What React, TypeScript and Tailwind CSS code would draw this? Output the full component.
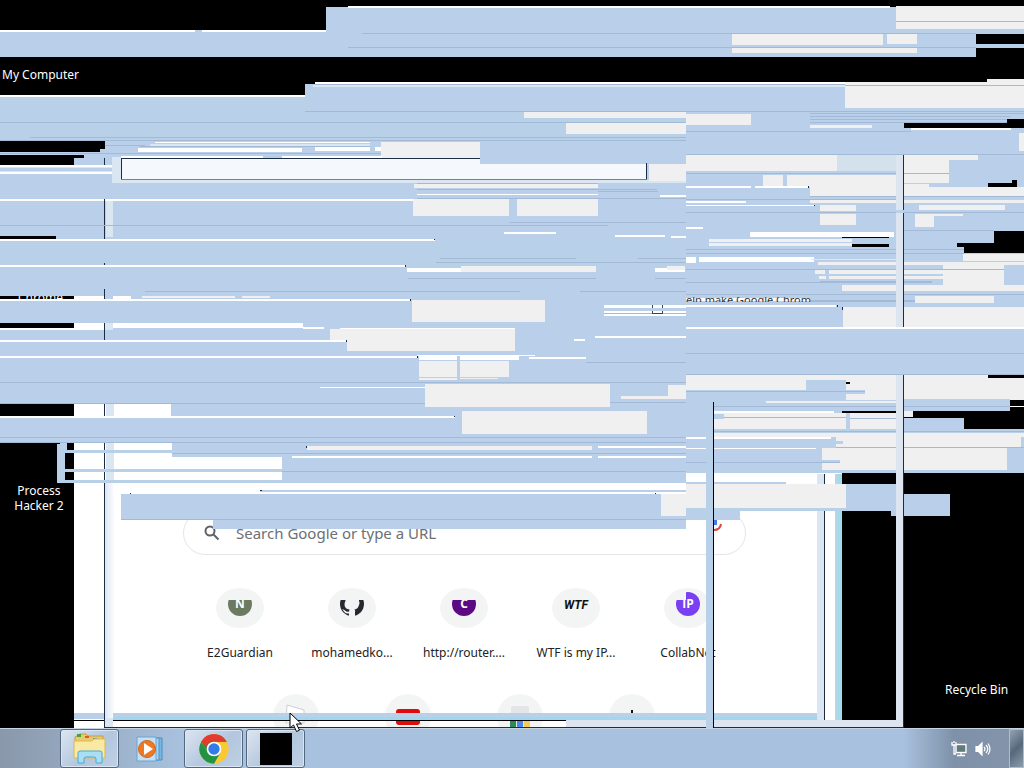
import React from "react";

type Band = [fill: string, x: number, y: number, w: number, h: number];

const B = "#bad0ea";
const C = "#b8d0e8";
const L = "#a3bad6";
const G = "#f0f0f0";
const W = "#ffffff";
const P = "#dbe6f3";
const K = "#000000";
const D = "#1c2c44";

const trails: Band[] = [
  // title bars at the top edge
  [B, 326, 7, 698, 27], [W, 348, 6, 542, 2], [B, 0, 31, 976, 26], [W, 0, 30, 326, 2], [B, 195, 30, 7, 2],
  [G, 896, 6, 128, 23], [L, 896, 21, 128, 1], [C, 884, 29, 140, 5], [C, 917, 44, 107, 4],
  [L, 362, 33, 614, 1], [L, 348, 47, 628, 1], [G, 732, 34, 151, 11], [G, 887, 34, 30, 10], [G, 732, 48, 185, 5],
  // second sweep
  [B, 305, 84, 719, 57], [W, 315, 82, 530, 2], [L, 315, 84, 530, 1], [P, 313, 85, 532, 2],
  [G, 845, 82, 179, 26], [G, 987, 79, 37, 6], [L, 845, 85, 179, 1],
  [C, 0, 97, 686, 44], [B, 305, 88, 540, 24], [W, 0, 95, 305, 2],
  [L, 305, 111, 719, 1], [L, 0, 122, 686, 1], [L, 30, 137, 656, 1], [L, 0, 140, 686, 1],
  [G, 524, 112, 162, 6], [G, 686, 114, 65, 11], [G, 566, 123, 120, 11],
  [L, 810, 113, 214, 1], [L, 810, 116, 200, 1], [L, 810, 119, 197, 1], [L, 810, 122, 197, 1],
  [K, 1007, 119, 17, 4], [K, 904, 123, 120, 5], [G, 810, 125, 62, 3],
  [B, 686, 128, 338, 345], [L, 686, 131, 225, 1], [W, 911, 128, 100, 2], [G, 1019, 133, 5, 18],
  // left block
  [B, 0, 141, 686, 102], [C, 0, 241, 686, 26], [B, 0, 267, 686, 176],
  [K, 0, 141, 105, 8], [K, 0, 149, 100, 3], [K, 0, 155, 84, 3], [K, 0, 158, 74, 7],
  [L, 105, 145, 40, 1], [W, 155, 142, 215, 1], [P, 150, 144, 220, 2], [W, 138, 148, 164, 4],
  [L, 140, 146, 230, 1], [W, 315, 147, 55, 4], [W, 375, 147, 8, 4], [G, 381, 142, 99, 18],
  [L, 0, 153, 381, 1], [W, 121, 156, 142, 2], [W, 282, 156, 100, 2],
  [P, 112, 157, 9, 26], [P, 121, 180, 565, 3], [D, 104, 158, 1, 7],
  [W, 0, 165, 112, 2], [P, 0, 167, 112, 1], [P, 0, 171, 112, 1], [W, 0, 172, 112, 2],
  ["#f5f8fc", 121, 158, 359, 22], ["#f5f8fc", 480, 164, 167, 16],
  [D, 121, 158, 359, 1], [D, 121, 158, 1, 22], [D, 646, 163, 1, 16], ["#77808b", 121, 179, 526, 1], [G, 649, 164, 37, 17],
  [L, 417, 183, 181, 1], [G, 414, 184, 184, 4], [L, 417, 189, 240, 1], [L, 598, 191, 60, 1], [W, 417, 194, 181, 1], [W, 660, 195, 26, 2],
  [W, 0, 199, 413, 2], [L, 417, 198, 269, 1], [G, 413, 199, 96, 17], [G, 517, 199, 81, 17],
  [D, 104, 199, 1, 40], [P, 106, 201, 7, 36], [L, 0, 225, 608, 1], [L, 510, 222, 176, 1],
  [K, 0, 236, 56, 3], [W, 0, 239, 435, 2], [D, 434, 239, 1, 1],
  [W, 504, 232, 52, 2], [W, 615, 235, 50, 2], [W, 671, 236, 15, 2],
  [L, 440, 258, 136, 1], [L, 638, 258, 48, 1], [L, 436, 262, 250, 1],
  [W, 0, 265, 405, 2], [D, 405, 265, 1, 2], [W, 407, 268, 110, 4], [G, 461, 266, 135, 6], [W, 655, 268, 30, 4], [G, 667, 266, 18, 4],
  [D, 104, 263, 1, 2], [L, 408, 278, 188, 1], [L, 655, 278, 31, 1], [L, 145, 291, 375, 1], [L, 580, 291, 106, 1],
  [D, 104, 289, 1, 10], [K, 0, 296, 74, 3], [W, 74, 296, 30, 3], [W, 113, 296, 18, 3], [G, 142, 296, 93, 2], [G, 242, 296, 28, 2],
  [W, 0, 299, 410, 2], [D, 410, 299, 1, 2], [G, 412, 300, 133, 22],
  [W, 604, 305, 82, 3], [W, 604, 311, 82, 5], [L, 604, 313, 82, 1],
  [K, 0, 323, 74, 5], [W, 74, 323, 30, 5], [D, 104, 323, 1, 17], [P, 105, 323, 8, 7], [W, 113, 323, 190, 5], [W, 303, 327, 21, 2],
  [W, 0, 328, 104, 2], [W, 340, 328, 175, 2], [G, 330, 329, 185, 22], [W, 0, 340, 346, 2], [B, 0, 342, 347, 13], [D, 346, 340, 1, 2],
  [W, 0, 356, 417, 2], [W, 417, 355, 118, 1], [G, 419, 361, 38, 16], [G, 460, 361, 49, 16], [W, 419, 356, 38, 4], [W, 460, 356, 59, 4],
  [G, 419, 378, 38, 2], [G, 460, 378, 38, 1], [D, 417, 356, 1, 2], [W, 574, 339, 11, 2], [W, 595, 336, 91, 2], [W, 529, 357, 57, 2],
  [L, 586, 362, 100, 1], [L, 0, 382, 686, 1], [W, 320, 387, 105, 1], [G, 425, 384, 185, 23], [G, 668, 385, 18, 12], [G, 621, 396, 65, 3],
  [L, 0, 403, 425, 1], [L, 610, 402, 76, 1], [K, 0, 404, 74, 12], [W, 74, 404, 97, 12], [D, 104, 404, 1, 12], [P, 106, 404, 8, 12],
  [W, 0, 416, 455, 2], [D, 454, 416, 1, 1], [G, 462, 411, 185, 23], [L, 0, 437, 686, 1], [L, 0, 442, 686, 1],
  [B, 172, 443, 514, 44], [W, 74, 443, 98, 40], [D, 104, 443, 1, 40], [P, 106, 443, 8, 40],
  [W, 172, 457, 110, 26], [B, 57, 444, 8, 38], [B, 60, 443, 7, 10], [C, 60, 450, 120, 3], [C, 57, 469, 225, 3], [C, 57, 480, 225, 3],
  [G, 307, 446, 285, 4], [W, 598, 446, 88, 2], [W, 292, 456, 300, 2], [W, 598, 456, 88, 2], [D, 306, 446, 1, 2],
  [L, 172, 453, 514, 1], [L, 282, 471, 404, 1],
  // lower sweep over the search box
  [W, 113, 483, 573, 11], [B, 260, 490, 426, 2], [D, 260, 490, 2, 1], [W, 130, 492, 525, 2], [B, 121, 494, 565, 26], [D, 130, 493, 1, 1], [D, 655, 493, 1, 1],
  [G, 661, 494, 25, 22], [B, 213, 520, 473, 9], [L, 213, 519, 473, 1], [L, 121, 519, 92, 1],
  // right-hand windows
  [L, 686, 154, 338, 1], [G, 686, 155, 151, 16], ["#d3e1ed", 837, 155, 61, 16], [G, 904, 155, 74, 5], [G, 904, 160, 45, 23],
  [L, 686, 173, 263, 1], [G, 763, 175, 20, 12], [G, 787, 175, 111, 12], [G, 810, 187, 88, 9],
  [W, 686, 186, 65, 2], [W, 755, 186, 54, 2], [D, 808, 186, 1, 2], [K, 1012, 180, 5, 7], [K, 988, 183, 25, 4],
  [G, 904, 184, 25, 3], [G, 904, 187, 120, 9], [L, 810, 196, 214, 1], [G, 810, 200, 214, 3], [L, 686, 199, 212, 1],
  [W, 686, 201, 60, 2], [W, 686, 205, 128, 1], [D, 814, 205, 1, 1], [G, 820, 205, 36, 6], [G, 820, 214, 36, 11],
  [G, 919, 205, 86, 5], [L, 686, 212, 338, 1], [G, 915, 214, 48, 2], [G, 915, 216, 19, 11],
  [W, 686, 227, 17, 2], [W, 750, 232, 144, 5], [K, 842, 237, 47, 1], [G, 709, 239, 143, 3], [G, 709, 243, 143, 3], [K, 852, 244, 37, 3],
  [L, 904, 230, 90, 1], [K, 994, 231, 30, 22], [K, 957, 243, 40, 4], [K, 964, 247, 32, 6],
  [L, 686, 249, 278, 1], [L, 686, 253, 278, 1], [W, 686, 257, 10, 6], [W, 699, 257, 115, 5], [P, 811, 259, 87, 1],
  [G, 963, 254, 61, 7], [G, 818, 262, 206, 3], [B, 898, 266, 45, 4], [G, 943, 262, 61, 27], [L, 686, 269, 318, 1],
  [G, 815, 270, 10, 4], [G, 829, 270, 114, 4], [G, 819, 276, 7, 3], [G, 829, 276, 114, 3], [L, 820, 281, 112, 2],
  [L, 686, 282, 160, 1], [G, 842, 285, 182, 6], [L, 686, 294, 338, 1], [W, 686, 298, 124, 3], [G, 915, 296, 79, 7], [L, 810, 300, 105, 2],
  [W, 686, 305, 150, 2], [D, 837, 305, 1, 2], [D, 842, 307, 1, 3], [G, 843, 307, 181, 20], [W, 686, 327, 338, 2],
  [B, 686, 329, 338, 46], [L, 686, 353, 338, 1], [L, 686, 374, 338, 1],
  [G, 686, 375, 212, 15], [B, 806, 380, 40, 20], [G, 846, 379, 52, 21], [K, 846, 382, 4, 2], [B, 846, 390, 19, 4], [L, 686, 391, 179, 1],
  [G, 904, 375, 120, 25], [K, 988, 375, 36, 3], [G, 766, 401, 132, 2], [B, 904, 399, 106, 12], [L, 714, 406, 296, 1],
  [K, 1010, 400, 14, 29], [W, 1010, 406, 14, 1], [K, 904, 411, 120, 18], [G, 904, 411, 9, 6], [W, 714, 411, 120, 2], [K, 842, 411, 62, 2],
  [G, 714, 413, 132, 17], [B, 714, 414, 10, 5], [L, 724, 417, 122, 1], [G, 850, 413, 48, 16], [L, 850, 418, 48, 1], [B, 904, 418, 60, 11],
  [C, 714, 429, 310, 4], [L, 714, 431, 310, 1], [G, 714, 433, 184, 4], [G, 904, 433, 120, 4], [W, 686, 437, 145, 2],
  [G, 836, 437, 185, 10], [C, 714, 441, 129, 3], [W, 686, 448, 130, 1], [L, 836, 447, 188, 1], [G, 822, 448, 185, 22],
  [B, 822, 460, 18, 3], [L, 686, 462, 154, 1], [C, 686, 470, 338, 3],
  [W, 686, 474, 156, 38], [B, 686, 482, 100, 2], [G, 686, 484, 160, 24],
];

const frames: Band[] = [
  [P, 817, 474, 7, 246], [D, 824, 474, 1, 246], ["#b8d3ea", 835, 474, 3, 246], ["#a2dcea", 838, 474, 4, 246],
  [G, 686, 484, 160, 24], [B, 846, 484, 58, 27], [C, 686, 508, 205, 3], [B, 686, 511, 54, 9],
  [B, 891, 494, 59, 22],
  ["#dde6f0", 896, 155, 7, 172], [D, 903, 155, 1, 172], [C, 896, 210, 8, 3],
  ["#dde6f0", 896, 375, 7, 353], [D, 903, 375, 1, 353],
  [D, 104, 483, 1, 245],
  [B, 74, 713, 30, 6], [K, 74, 720, 30, 1],
  [B, 113, 713, 704, 4], ["#9ed8ec", 113, 717, 704, 3], [K, 113, 720, 453, 1],
  ["#dce5f0", 566, 720, 337, 7], [D, 566, 727, 338, 1], [D, 105, 727, 461, 1],
  [P, 105, 718, 8, 9], [C, 706, 403, 7, 325], [K, 713, 402, 1, 326],
];

const Bands = ({ items }: { items: Band[] }) => (
  <>
    {items.map(([fill, x, y, w, h], i) => (
      <rect key={i} x={x} y={y} width={w} height={h} fill={fill} />
    ))}
  </>
);

const Trails = () => (
  <svg className="pointer-events-none absolute left-0 top-0" width="1024" height="728" shapeRendering="crispEdges" aria-hidden="true">
    <defs>
      <clipPath id="chromeClip"><rect x="0" y="296" width="74" height="3" /></clipPath>
      <clipPath id="helpClip"><rect x="686" y="297" width="130" height="5" /></clipPath>
    </defs>
    <Bands items={trails} />
    <Bands items={frames} />
    <text x="18" y="302" clipPath="url(#chromeClip)" fill="#fff" fontSize="12" fontFamily="Noto Sans, sans-serif">Chrome</text>
    <text x="686" y="304" clipPath="url(#helpClip)" fill="#333" fontSize="11" fontFamily="Noto Sans, sans-serif">elp make Google Chrom</text>
    <path d="M652 305v3M662 305v3M652 311v2h10v-2" fill="none" stroke="#444" strokeWidth="1" />
    <path d="M714 520h3v5h-3z" fill="#4678e8" />
    <path d="M714 530q6 0 7-6" fill="none" stroke="#db4437" strokeWidth="2" shapeRendering="auto" />
  </svg>
);

type Tile = { label: string; icon: React.ReactNode };

const Badge = ({ color, text }: { color: string; text: string }) => (
  <>
    <circle cx="24" cy="23" r="12" fill={color} />
    <text x="24" y="27" textAnchor="middle" fontSize="12" fontWeight="700" fill="#fff" fontFamily="Open Sans, sans-serif">{text}</text>
  </>
);

const tiles: Tile[] = [
  { label: "E2Guardian", icon: <Badge color="#6b7a61" text="N" /> },
  {
    label: "mohamedko...",
    icon: (
      <>
        <circle cx="24" cy="23" r="12" fill="#25292e" />
        <path d="M17 15h14v5q1 2 0 4-1 4-4.500 4.500 1 1 .5 3v4h-6v-3q-4 .5-5-2-1-1.500-2-2 2-.5 3 1 2 2 4 1l.5-2Q17 28 16.500 24q0-3 1-4z" fill="#f3f4f4" />
      </>
    ),
  },
  { label: "http://router....", icon: <Badge color="#5b0a83" text="C" /> },
  {
    label: "WTF is my IP...",
    icon: <text x="24" y="28" textAnchor="middle" fontSize="12" fontWeight="700" fontStyle="italic" fill="#111" fontFamily="Roboto, sans-serif">WTF</text>,
  },
  { label: "CollabNet", icon: <Badge color="#7a3ff2" text="IP" /> },
];

const lowerTiles: Tile[] = [
  { label: "Web Store", icon: <path d="M15 12l17 5v13H14z" fill="#fff" stroke="#c9cfda" /> },
  {
    label: "YouTube",
    icon: <><rect x="12" y="16" width="24" height="16" rx="3" fill="#e00b0b" /><path d="M22 20l7 4-7 4z" fill="#fff" /></>,
  },
  {
    label: "News",
    icon: <><rect x="15" y="13" width="18" height="20" rx="2" fill="#e3e5e6" /><path d="M14 28h6v6h-6z" fill="#2c8a58" /><path d="M21 28h6v6h-6z" fill="#4788ee" /><path d="M28 28h6v6h-6z" fill="#f4cb55" /></>,
  },
  { label: "Add shortcut", icon: <path d="M24 17v14M17 24h14" stroke="#111" strokeWidth="2" /> },
];

const UpperShortcut = ({ tile, index }: { tile: Tile; index: number }) => (
  <a href="#" className="flex w-28 flex-col items-center gap-4 text-[12px] leading-4 text-[#222]">
    <svg width="48" height="48" viewBox="0 0 48 48" aria-hidden="true">
      <clipPath id={`tile-${index}`}>
        <path d={tile.label === "CollabNet" ? "M0 19h22V0h26v48H0z" : "M0 19h48v29H0z"} />
      </clipPath>
      <ellipse cx="24" cy="27" rx="24" ry="20" fill="#f3f4f4" />
      <g clipPath={`url(#tile-${index})`}>{tile.icon}</g>
    </svg>
    {tile.label}
  </a>
);

const LowerShortcut = ({ tile }: { tile: Tile }) => (
  <a href="#" aria-label={tile.label} className="flex w-28 justify-center">
    <svg width="48" height="48" viewBox="0 0 48 48" aria-hidden="true">
      <circle cx="24" cy="24" r="23" fill="#f3f4f4" />
      {tile.icon}
    </svg>
  </a>
);

const Browser = () => (
  <section className="absolute inset-x-0 top-[404px] bottom-0 left-[74px] w-[768px] overflow-hidden bg-white pl-[30px]">
    <div className="h-full overflow-hidden border-l border-[#1c2c44] bg-[linear-gradient(to_right,#dce6f2,#ffffff_10px)] pt-[107px] pl-[78px]">
      <form className="flex h-11 w-[563px] items-center gap-4 rounded-full border border-[#e3e5e8] px-5">
        <svg width="16" height="16" viewBox="0 0 16 16" fill="none" stroke="#5b626a" strokeWidth="2" aria-hidden="true">
          <circle cx="6" cy="6" r="4.500" /><path d="M9.500 9.500l5 5" />
        </svg>
        <input aria-label="Search" placeholder="Search Google or type a URL" className="min-w-0 flex-1 bg-transparent text-[15px] text-[#333] outline-none placeholder:text-[#6b7075]" />
      </form>
      <nav aria-label="Shortcuts" className="flex flex-col gap-8 pt-[26px] pl-px">
        <div className="flex">{tiles.map((t, i) => <UpperShortcut key={t.label} tile={t} index={i} />)}</div>
        <div className="flex pl-14">{lowerTiles.map((t) => <LowerShortcut key={t.label} tile={t} />)}</div>
      </nav>
    </div>
  </section>
);

const ExplorerIcon = () => (
  <svg width="36" height="34" viewBox="0 0 36 34" aria-hidden="true">
    <path d="M3 5l5-3h6l2 2h15v21H3z" fill="#e9c968" stroke="#c59d3b" />
    <path d="M5 2h4v3H5z" fill="#45a33f" /><path d="M13 4h4v2h-4z" fill="#dc5934" /><path d="M21 6h4v2h-4z" fill="#5497df" />
    <path d="M2 9h18l2-2h11v19H2z" fill="#f9e9a5" stroke="#dbb956" />
    <path d="M6 31V21q0-2 2-2h20q2 0 2 2v10h-6v-4q0-2-2-2h-8q-2 0-2 2v4z" fill="#a9dff4" stroke="#4ba9d2" />
  </svg>
);

const PlayerIcon = () => (
  <svg width="32" height="28" viewBox="0 0 32 28" aria-hidden="true">
    <path d="M8 3h18v22H8z" fill="#7ab6e2" stroke="#4d8ebe" /><path d="M5 3h18v22H5z" fill="#a7d2f1" stroke="#5294c4" />
    <path d="M1 2h19v24H1z" fill="#c3e0f6" stroke="#66a5d1" />
    <circle cx="11" cy="14" r="8.500" fill="#ec7a22" stroke="#d66518" /><path d="M8 8l9 6-9 6z" fill="#fff" />
  </svg>
);

const ChromeIcon = () => (
  <svg width="32" height="32" viewBox="0 0 48 48" aria-hidden="true">
    <circle cx="24" cy="24" r="22" fill="#fbc934" />
    <path d="M24 24L4.900 13A22 22 0 0 1 43.100 13H24z" fill="#e33b2e" />
    <path d="M4.900 13A22 22 0 0 0 24 46l9.500-16.500L24 24 14.500 29.500z" fill="#229342" />
    <path d="M4.900 13L14.500 29.500 24 13z" fill="#229342" /><path d="M4.900 13A22 22 0 0 1 43.100 13H24a11 11 0 0 0-10.500 8z" fill="#e33b2e" />
    <circle cx="24" cy="24" r="11" fill="#fff" /><circle cx="24" cy="24" r="8.500" fill="#347bea" />
  </svg>
);

const taskButton = "flex h-[39px] w-[59px] items-center justify-center rounded-[3px]";
const openTask = "border border-[#53677f] bg-[linear-gradient(135deg,#dce5ef,#b2c6de_55%,#bed0e4)] shadow-[inset_0_0_0_1px_#d9e5f2]";

const Taskbar = () => (
  <footer className="flex h-10 shrink-0 items-center border-t border-[#c5d3e3] bg-[linear-gradient(to_right,#8998aa,#a8c1de_180px,#a8c1de_calc(100%-120px),#7e91a9_calc(100%-70px),#8495a9)] pl-[60px]">
    <div className="flex flex-1 gap-[3px]">
      <button aria-label="Explorer" className={`${taskButton} ${openTask}`}><ExplorerIcon /></button>
      <button aria-label="Media Player" className={taskButton}><PlayerIcon /></button>
      <button aria-label="Chrome" className={`${taskButton} ${openTask}`}><ChromeIcon /></button>
      <button aria-label="Command window" className={`${taskButton} ${openTask}`}><span className="size-8 bg-black" /></button>
    </div>
    <div className="flex items-center gap-2 pr-[18px]">
      <button aria-label="Network">
        <svg width="16" height="16" viewBox="0 0 16 16" fill="none" stroke="#fff" strokeWidth="1.300" aria-hidden="true">
          <path d="M5 3.500h10v8H5zM10 12v2M6 14.500h8M1 1v3h4V1M3 0v2M3 4v9h2" /><path d="M6 4.500h8v6H6z" fill="#607b78" stroke="none" />
        </svg>
      </button>
      <button aria-label="Volume">
        <svg width="16" height="16" viewBox="0 0 16 16" fill="none" stroke="#fff" strokeWidth="1.200" aria-hidden="true">
          <path d="M1 5.500h2.500L7 2v12l-3.500-3.500H1z" fill="#fff" /><path d="M9 6q2 2 0 4M11 4q3.500 4 0 8M13 2.500q4 5.500 0 11" />
        </svg>
      </button>
    </div>
    <button aria-label="Show desktop" className="h-full w-[15px] border border-[#aebdce] bg-[linear-gradient(135deg,#93a3b2,#56697c_50%,#8c9dac)]" />
  </footer>
);

export default function App() {
  return (
    <div className="flex h-screen w-full flex-col overflow-hidden bg-black font-['Noto_Sans','Open_Sans',sans-serif]">
      <main className="relative min-h-0 flex-1 overflow-hidden text-[12px] leading-[15px] text-white">
        <Browser />
        <Trails />
        <button className="absolute left-[2px] top-[67px]">My Computer</button>
        <button className="absolute left-2 top-[483px] w-[62px]">Process Hacker 2</button>
        <button className="absolute left-[945px] top-[682px] whitespace-nowrap">Recycle Bin</button>
      </main>
      <Taskbar />
      <svg className="pointer-events-none absolute left-[289px] top-[712px]" width="15" height="21" viewBox="0 0 15 21" aria-hidden="true">
        <path d="M1 1v15l3.500-3 3 6.500 3-1.300-3-6.200h5z" fill="#fff" stroke="#000" />
      </svg>
    </div>
  );
}
